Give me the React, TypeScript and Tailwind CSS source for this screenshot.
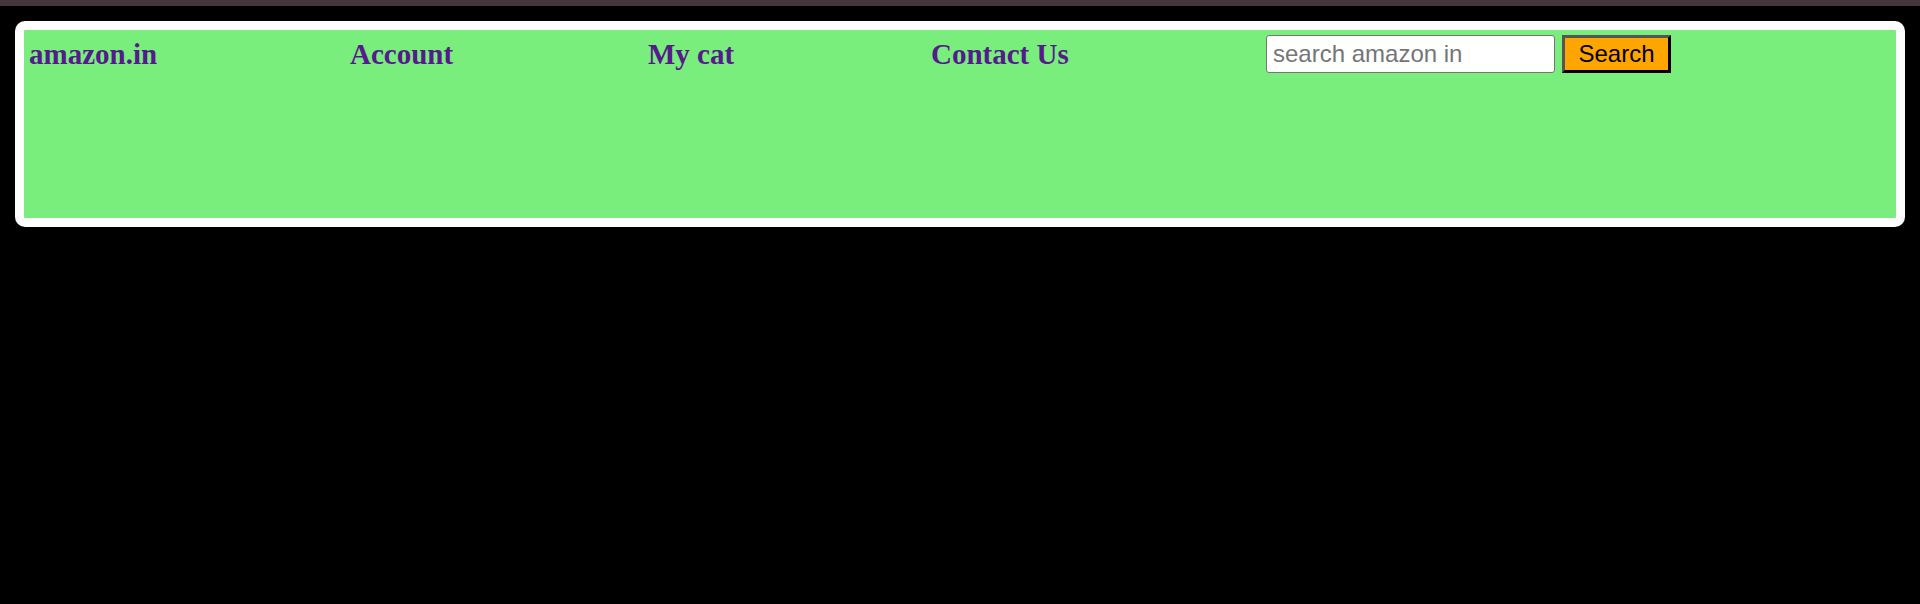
export default function App() {
  const links = [
    { label: "amazon.in", w: "w-[321px]" },
    { label: "Account", w: "w-[298px]" },
    { label: "My cat", w: "w-[283px]" },
    { label: "Contact Us", w: "w-[335px]" },
  ];

  return (
    <div className="min-h-[604px] w-full bg-black">
      <div className="h-[6px] w-full bg-[#45373b]" />
      <nav className="mx-[15px] mt-[15px] h-[206px] rounded-[10px] border-[9px] border-white bg-[#79ee7d]">
        <div className="flex items-start pl-[5px] pt-[5px]">
          {links.map((l) => (
            <a
              key={l.label}
              href="#"
              className={`${l.w} mt-[3px] shrink-0 text-[29px] leading-[32px] font-bold text-[#551a8b] [font-family:'Liberation_Serif',serif]`}
            >
              {l.label}
            </a>
          ))}
          <input
            type="text"
            placeholder="search amazon in"
            className="h-[38px] w-[289px] shrink-0 rounded-[3px] border border-[#767676] bg-white px-[6px] text-[24px] text-black outline-none placeholder:text-[#757575] [font-family:'Liberation_Sans',Arial,sans-serif]"
          />
          <button className="ml-[7px] h-[38px] w-[109px] shrink-0 border-[3px] border-t-[#555555] border-l-[#555555] border-b-black border-r-black bg-[#ffa500] text-[24px] leading-none text-black [font-family:'Liberation_Sans',Arial,sans-serif]">
            Search
          </button>
        </div>
      </nav>
    </div>
  );
}
